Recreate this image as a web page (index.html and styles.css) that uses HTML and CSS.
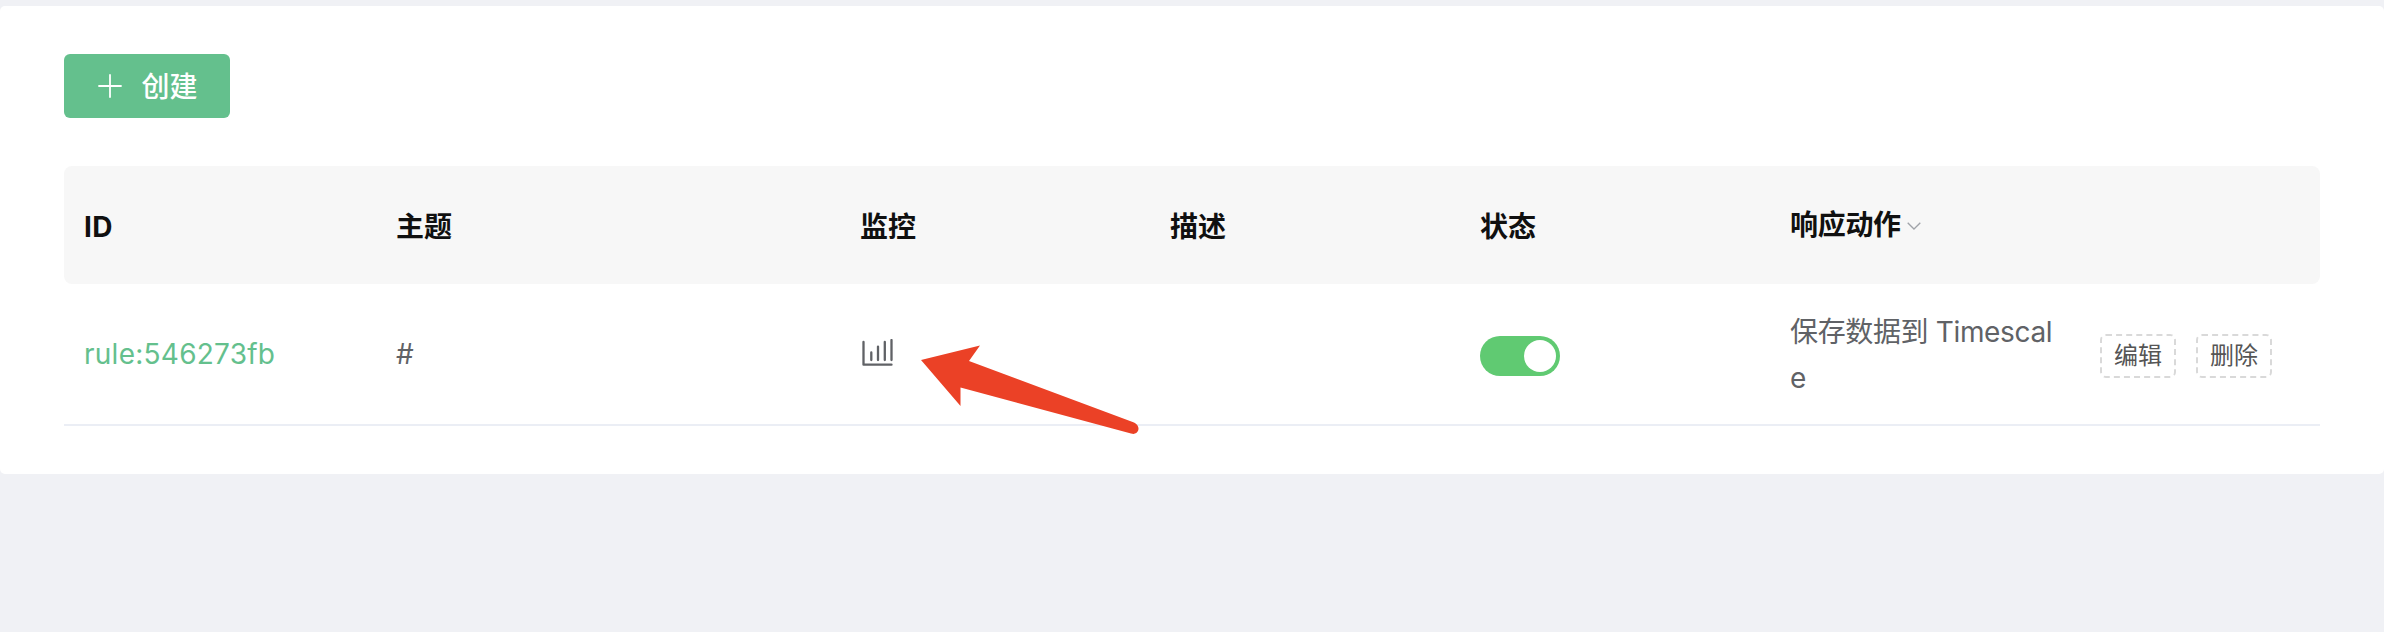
FILE: index.html
```html
<!DOCTYPE html>
<html lang="zh-CN">
<head>
<meta charset="utf-8">
<title>规则</title>
<link rel="stylesheet" href="styles.css">
</head>
<body>
<main class="panel">
  <button class="create" type="button">
    <svg class="plus" viewBox="0 0 24 24"><path d="M12 1v22M1 12h22"/></svg>
    <span class="create-label">创建</span>
  </button>
  <div class="table">
    <div class="row head">
      <div class="cell id">ID</div>
      <div class="cell">主题</div>
      <div class="cell">监控</div>
      <div class="cell">描述</div>
      <div class="cell">状态</div>
      <div class="cell filter"><span>响应动作</span><svg class="chevron" viewBox="0 0 14 8"><path d="M.7.7 7 7 13.3.7"/></svg></div>
      <div class="cell"></div>
    </div>
    <div class="row body">
      <div class="cell"><a class="link">rule:546273fb</a></div>
      <div class="cell">#</div>
      <div class="cell monitor">
        <svg class="chart" viewBox="0 0 32 28"><path d="M1.5 3v22.7H29.5M9.3 13.5v7.5M16 7.6v13.4M22.8 3v18M29.5 1v20"/></svg>
        <svg class="arrow" viewBox="0 0 218 90"><path d="M0 15 59 .5 48 16 213 77.500Q219 81 217 86Q215 90 210 88.500L39.500 42.500V61Z"/></svg>
      </div>
      <div class="cell"></div>
      <div class="cell"><span class="switch"><span class="knob"></span></span></div>
      <div class="cell action">保存数据到 Timescale</div>
      <div class="cell ops"><button class="op" type="button">编辑</button><button class="op" type="button">删除</button></div>
    </div>
  </div>
</main>
</body>
</html>
```

FILE: styles.css
```css
* { box-sizing: border-box; }
body {
  margin: 0;
  padding-top: 6px;
  background: #f0f1f5;
  color: #606266;
  font: 28px/46px Inter, "Noto Sans CJK SC", sans-serif;
}
button { font-family: inherit; margin: 0; }
svg { display: block; flex: none; }
.panel {
  height: 468px;
  padding: 48px 64px;
  background: #fff;
  border-radius: 5px;
}
.create {
  display: flex;
  align-items: center;
  width: 166px;
  height: 64px;
  padding: 0 0 0 34px;
  border: 0;
  border-radius: 6px;
  background: #64c08d;
  color: #fff;
  font-size: 28px;
  font-weight: 500;
}
.plus { width: 24px; height: 24px; margin-top: -1px; fill: none; stroke: #fff; stroke-width: 1.8; stroke-linecap: round; }
.create-label { margin: -3px 0 0 19.5px; }
.table { margin-top: 48px; }
.row {
  display: grid;
  grid-template-columns: 312px 464px 310px 310px 310px 310px 240px;
  align-items: center;
}
.cell { padding: 0 20px; }
.head {
  height: 118px;
  padding-top: 4px;
  border-radius: 8px;
  background: #f7f7f7;
  color: #101010;
  font-weight: 600;
}
.id { font-weight: 700; letter-spacing: .3px; }
.filter { display: flex; align-items: center; padding-bottom: 5px; letter-spacing: -.3px; }
.chevron { width: 14px; height: 8px; margin: 3px 0 0 6px; fill: none; stroke: #a0a3a9; stroke-width: 1.3; }
.body { height: 142px; border-bottom: 2px solid #ebeef5; }
.link { color: #64c08d; letter-spacing: .25px; }
.monitor { position: relative; }
.chart { width: 32px; height: 28px; margin: -3px 0 0 2px; fill: none; stroke: #606266; stroke-width: 2.3; stroke-linecap: round; stroke-linejoin: round; }
.arrow { position: absolute; left: 81px; top: 3px; width: 218px; height: 90px; fill: #eb4126; }
.switch {
  display: flex;
  justify-content: flex-end;
  width: 80px;
  height: 40px;
  margin-top: 4px;
  padding: 4px;
  border-radius: 20px;
  background: #60ca72;
}
.knob { width: 32px; height: 32px; border-radius: 50%; background: #fff; }
.action { padding-top: 2px; letter-spacing: -.35px; word-break: break-all; }
.ops { display: flex; gap: 20px; padding-top: 4px; }
.op {
  width: 76px;
  height: 44px;
  padding: 0;
  border: 2px dashed #d9d9d9;
  border-radius: 6px;
  background: #fff;
  color: #555;
  font-size: 24px;
  line-height: 38px;
}
```
